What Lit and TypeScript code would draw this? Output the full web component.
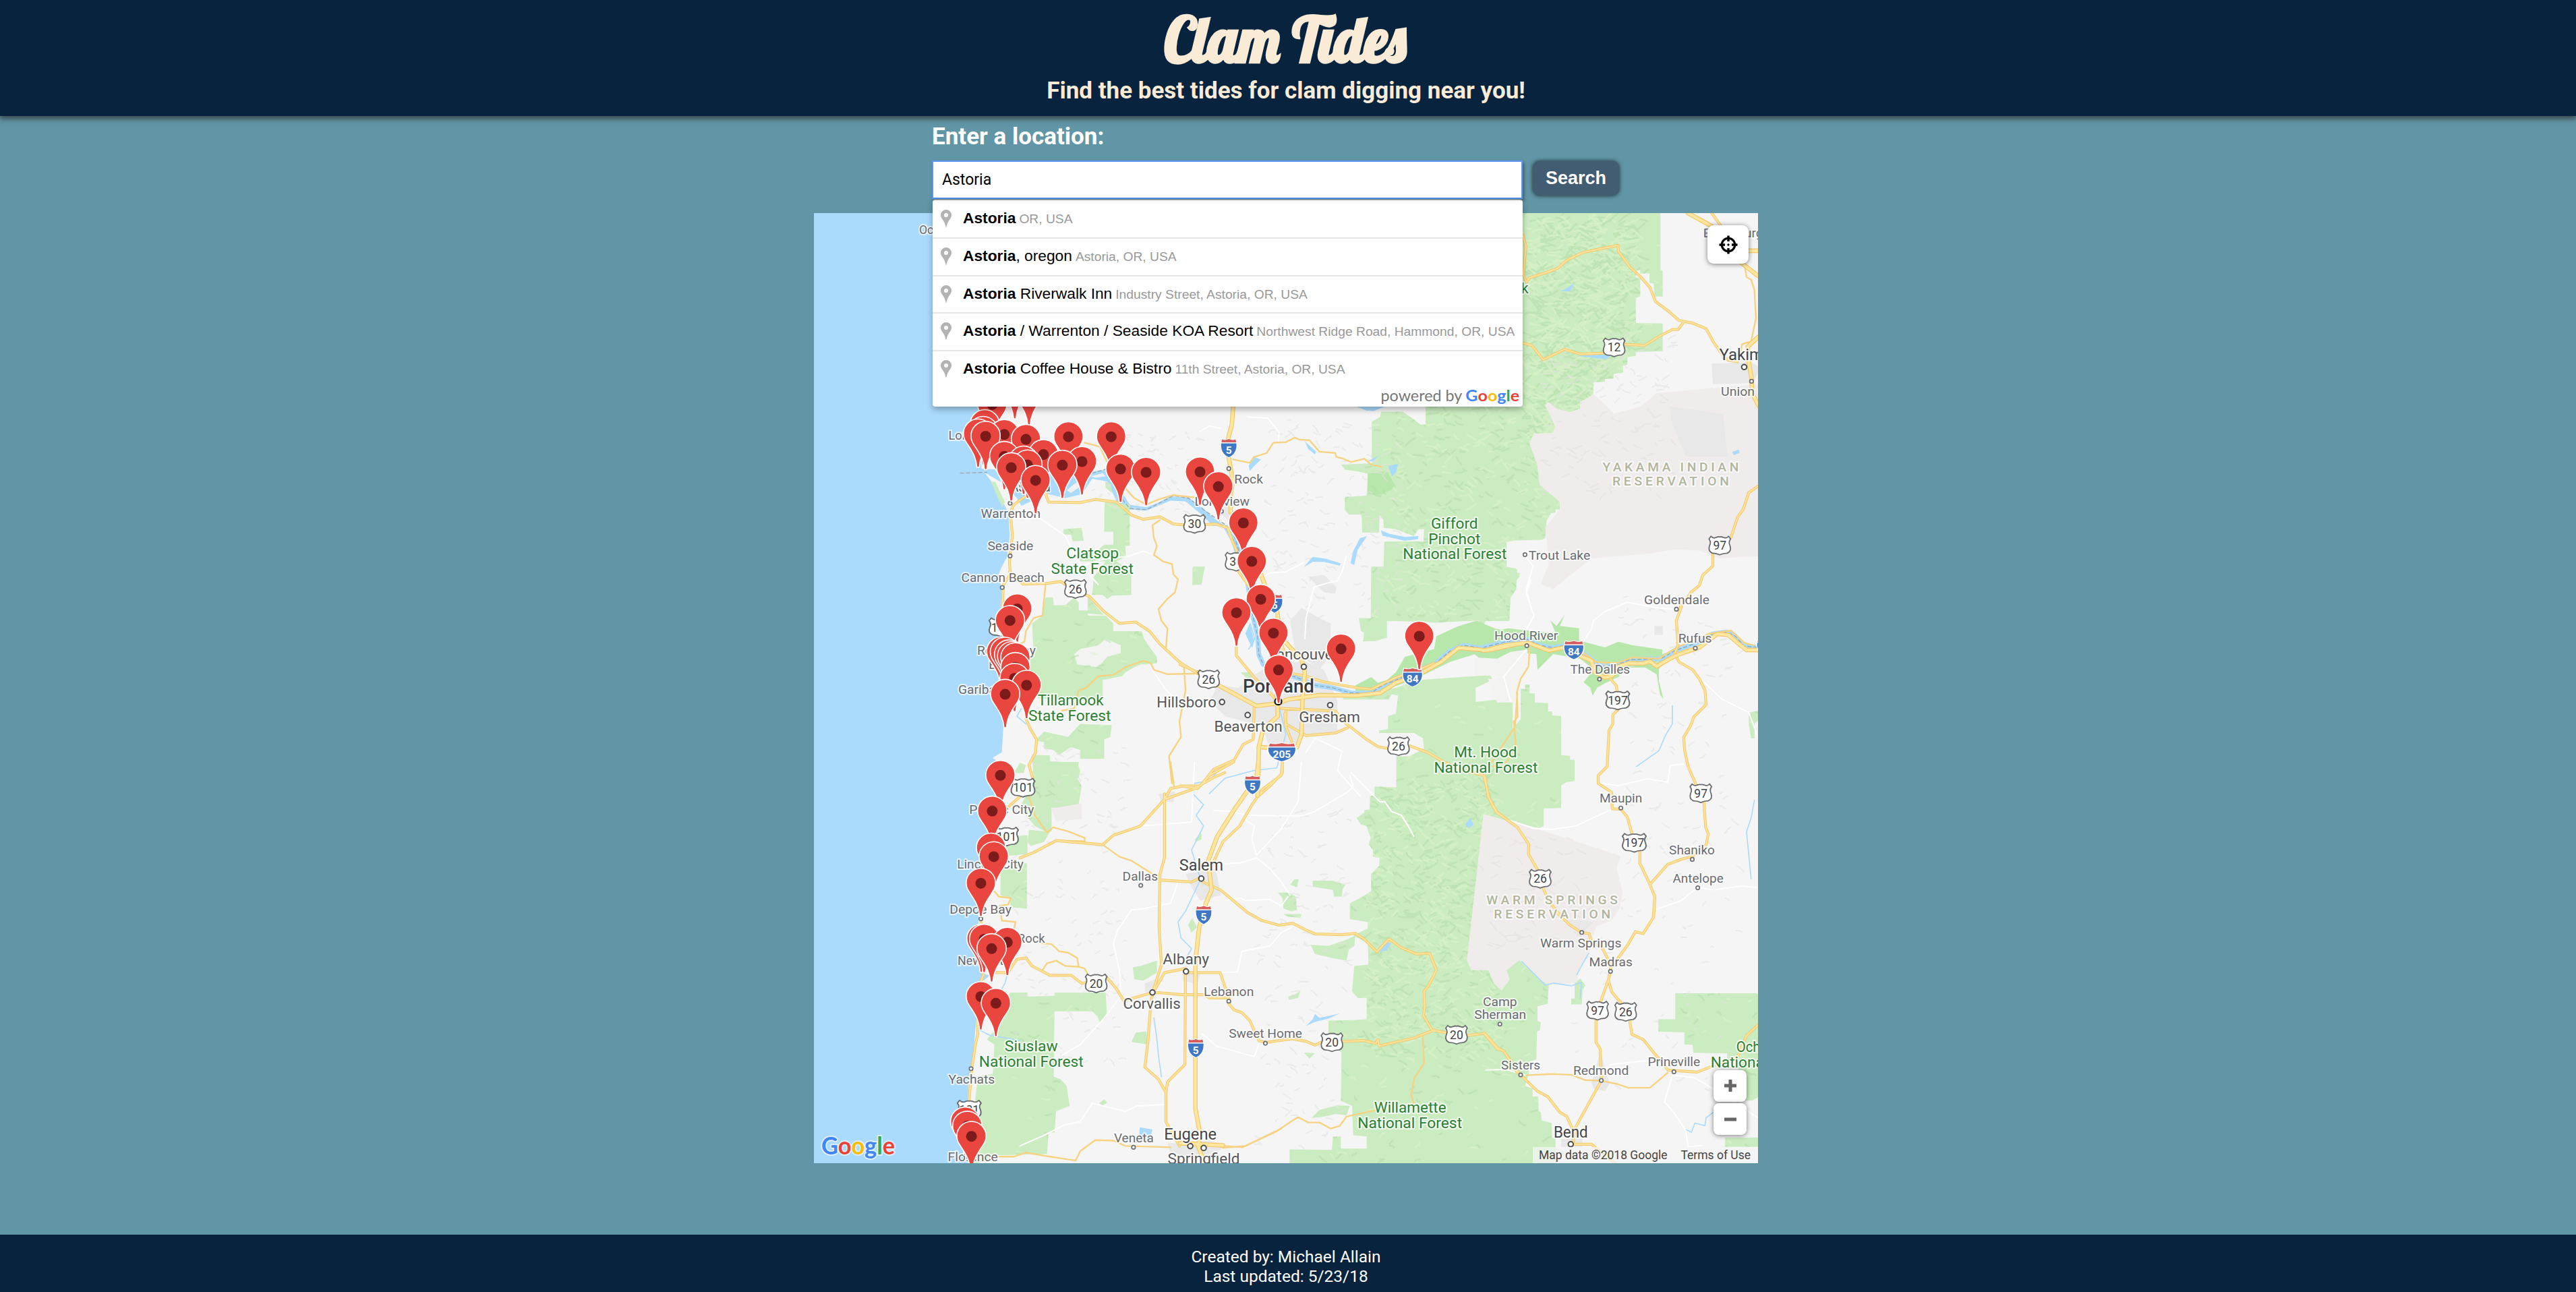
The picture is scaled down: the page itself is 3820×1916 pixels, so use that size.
import { LitElement, html, svg, css } from "lit";
import { customElement, state } from "lit/decorators.js";

/* ---------- map geometry ---------- */

// Each sheet has its own drawing grid, placed on the map by origin and scale.
type Sheet = { x: number; y: number; sx: number; sy: number };
const SHEETS: Record<string, Sheet> = {
  whole: { x: 1200, y: 300, sx: 0.90561, sy: 0.91837 },
  coastN: { x: 1200, y: 580, sx: 0.44643, sy: 0.38265 },
  coastS: { x: 1200, y: 1130, sx: 0.44643, sy: 0.39541 },
  valleyN: { x: 1750, y: 580, sx: 0.33333, sy: 0.38265 },
  valleyS: { x: 1750, y: 1130, sx: 0.33333, sy: 0.39541 },
  eastN: { x: 2200, y: 300, sx: 0.33333, sy: 0.38265 },
  eastM: { x: 2200, y: 860, sx: 0.33333, sy: 0.33333 },
  eastS: { x: 2200, y: 1300, sx: 0.33333, sy: 0.39286 },
};

const place = (s: string, x: number, y: number): [number, number] => {
  const t = SHEETS[s];
  return [+(t.x + x * t.sx).toFixed(1), +(t.y + y * t.sy).toFixed(1)];
};

const trace = (s: string, pts: string, close = false) => {
  const list = pts
    .trim()
    .split(/\s+/)
    .map((p) => {
      const [x, y] = p.split(",").map(Number);
      return place(s, x, y);
    });
  if (close) {
    // One winding direction for all areas, so that overlapping ones merge.
    let area = 0;
    list.forEach(([x, y], i) => {
      const [nx, ny] = list[(i + 1) % list.length];
      area += x * ny - nx * y;
    });
    if (area < 0) list.reverse();
  }
  return "M" + list.map((p) => p.join(" ")).join("L") + (close ? "Z" : "");
};

const shapes = (rows: [string, string][]) => rows.map(([s, p]) => trace(s, p, true)).join("");
const lines = (rows: [string, string][]) => rows.map(([s, p]) => trace(s, p)).join("");

const OCEAN = shapes([
  ["coastN", "-10,-700 560,-700 560,0 572,150 572,300 605,350 640,425 662,470 666,560 658,640 640,680 625,720 640,760 636,850 622,890 640,960 655,1000 650,1080 640,1120 655,1190 645,1300 640,1400 610,1420 620,1440 -10,1440"],
  ["coastS", "-10,-10 618,-10 625,130 600,200 592,330 568,400 570,480 562,560 562,600 565,680 572,800 562,860 552,1000 545,1100 530,1200 526,1290 532,1510 -10,1510"],
  ["coastN", "560,300 640,305 700,330 760,320 830,305 900,335 950,310 985,305 1010,340 1040,395 1065,440 1120,450 1160,432 1200,408 1260,413 1300,445 1350,498 1385,525 1340,522 1300,475 1250,427 1200,425 1120,463 1060,458 1022,430 990,350 940,340 905,400 850,415 790,398 740,425 705,445 690,415 640,355"],
]);

const SHOALS = shapes([
  ["coastN", "855,385 880,360 925,330 900,370 870,395"],
  ["coastN", "935,330 975,318 985,330 950,336"],
]);

const FOREST = shapes([
  ["valleyN", "1500,40 1092,50 1092,130 1070,130 1040,110 990,80 895,80 890,100 853,118 853,280 715,285 735,305 780,310 835,320 830,405 733,410 733,460 750,478 808,478 810,548 885,548 887,480 905,500 905,530 960,535 1040,562 1060,535 1085,535 1083,583 908,583 905,680 850,680 848,890 1060,893 1140,898 1225,893 1465,885 1470,800 1495,770 1500,690 1452,680 1450,585 1500,578"],
  ["valleyN", "795,880 920,878 920,955 870,968 815,970 818,935 805,930"],
  ["eastN", "-20,42 787,42 787,262 797,265 797,365 760,365 757,315 738,312 738,275 697,277 697,263 677,265 677,290 697,295 697,365 677,370 677,468 797,470 797,577 677,580 677,595 640,600 640,630 620,632 620,660 580,665 577,683 540,685 540,695 490,697 488,745 430,775 430,800 380,815 325,800 285,775 275,790 300,830 318,870 310,893 255,897 225,895 205,935 240,1020 250,1095 340,1160 340,1190 320,1190 320,1203 300,1205 280,1235 275,1300 260,1308 103,1312 103,1415 143,1418 145,1435 162,1437 160,1450 143,1470 143,1490 120,1520 115,1568 -20,1568"],
  ["eastM", "-20,0 145,0 140,25 117,50 115,183 12,183 -20,220"],
  ["valleyN", "725,1180 960,1150 1060,1120 1380,1100 1390,1120 1315,1150 1315,1205 1360,1200 1480,1190 1480,1568 865,1568 865,1535 962,1535 962,1415 1020,1415 1085,1385 1080,1345 1040,1325 885,1325 885,1315 925,1310 925,1260 960,1250 970,1180 940,1175 930,1195 725,1195"],
  ["eastM", "-40,545 110,545 110,660 130,660 165,620 165,485 185,485 185,465 205,465 205,505 228,505 228,545 287,548 287,585 305,585 305,603 345,605 345,780 385,782 385,800 405,800 405,895 368,900 345,915 345,1015 267,1017 267,1095 245,1105 130,1075 -40,1070"],
  ["valleyS", "962,0 962,105 905,105 903,92 865,92 865,125 845,128 843,178 820,180 820,190 785,210 805,235 830,240 848,285 840,310 858,330 858,355 888,360 885,390 850,420 850,485 800,510 755,530 755,590 835,600 835,625 770,650 835,680 838,760 775,765 765,860 790,885 830,885 830,965 775,968 660,970 660,1040 718,1090 715,1270 765,1290 770,1400 830,1405 830,1450 715,1450 715,1405 680,1405 675,1455 487,1453 487,1510 1510,1510 1510,0"],
  ["eastS", "-20,340 30,350 110,350 160,315 240,380 290,410 285,480 240,490 240,545 255,550 250,580 238,585 235,690 200,700 200,745 185,790 218,800 218,830 243,830 245,885 255,890 258,920 303,930 305,985 320,990 320,1090 -20,1090"],
  ["eastS", "853,440 1208,440 1230,445 1230,830 1195,845 1150,845 1130,690 1085,688 1083,667 933,665 930,635 893,633 893,588 778,585 778,538 853,538"],
  ["eastS", "1075,985 1230,985 1230,1020 1075,1020"],
  ["eastS", "390,460 405,460 405,400 430,385 453,410 440,430 437,482 390,482"],
  ["coastN", "983,350 1003,360 1005,395 985,375"],
  ["coastN", "980,485 982,430 1065,440 1065,600 1050,600 1052,640 1020,660 1070,695 1070,790 1005,793 990,806 975,790 940,790 945,720 985,660 900,660 900,635 950,625 980,595 1010,595 1010,545 980,545"],
  ["coastN", "845,535 905,530 912,580 875,582 870,556 845,556"],
  ["coastN", "1275,680 1312,680 1303,745 1272,752"],
  ["coastN", "925,795 950,830 978,868 925,862"],
  ["coastN", "785,800 810,800 812,830 850,830 880,800 895,820 895,850 925,850 925,870 985,870 1010,900 1010,930 1105,930 1112,960 1135,1000 1155,1030 1155,1055 1100,1060 1080,1070 1050,1090 1040,1105 975,1120 975,1190 930,1200 760,1190 735,1150 735,1040 745,1000 740,900 775,870"],
  ["coastN", "900,1290 1005,1295 1000,1340 980,1350 980,1425 900,1425 900,1390 870,1380 830,1410 810,1390 780,1385 780,1360 750,1355 780,1320 860,1340"],
  ["coastN", "740,1410 800,1412 800,1435 890,1440 900,1470 895,1500 850,1520 820,1568 750,1568"],
  ["coastN", "680,1480 700,1440 720,1450 712,1480"],
  ["coastN", "604,350 618,352 650,430 642,450 625,410"],
  ["coastS", "750,0 895,0 890,60 905,90 893,170 805,172 805,260 790,265 750,240 720,200 700,170 740,80"],
  ["coastS", "730,255 800,262 780,300 735,315 725,300"],
  ["coastS", "640,280 725,275 725,345 660,352 645,320"],
  ["coastS", "636,390 660,400 700,380 723,380 723,550 670,545 665,510 635,500"],
  ["coastS", "668,865 725,865 725,880 815,877 815,865 985,865 988,930 985,960 965,978 958,955 940,935 815,935 812,1180 835,1190 855,1215 865,1290 820,1310 815,1390 795,1390 790,1470 620,1475 560,1505 540,1505 545,1330 560,1180 610,1170 615,1060 590,1040 620,1000 600,960"],
  ["coastS", "1075,770 1100,765 1155,745 1155,790 1110,820 1080,815"],
  ["coastS", "1070,1050 1085,1015 1120,1010 1125,1060"],
  ["coastS", "963,1280 980,1265 990,1278 975,1288"],
  ["valleyS", "590,445 680,445 735,460 722,480 720,505 685,505 680,480 590,468"],
  ["valleyS", "435,490 485,490 515,505 520,555 495,560 460,550 455,510"],
  ["valleyS", "580,685 660,690 745,665 780,650 775,690 750,705 740,745 690,738 600,720"],
  ["valleyS", "490,460 508,440 528,440 520,470"],
  ["valleyS", "460,570 540,570 535,585 480,580"],
  ["valleyS", "480,880 515,870 535,858 525,885 485,892"],
  ["valleyS", "585,1335 620,1305 700,1288 755,1290 740,1325 690,1320 640,1330"],
  ["valleyS", "35,610 55,585 75,620 50,640"],
  ["valleyS", "65,290 95,265 95,290 70,300"],
  ["valleyS", "550,1090 600,1092 575,1112"],
  ["valleyN", "55,685 110,680 95,750 55,752"],
  ["valleyN", "270,1090 320,1090 400,1180 390,1200 350,1160"],
  ["eastM", "1180,590 1230,580 1230,620 1205,640 1205,705 1190,705 1180,640"],
  ["eastN", "320,1430 360,1390 445,1385 430,1415 385,1425 365,1450 322,1455"],
]);

const GORGE = shapes([
  ["valleyN", "780,1140 850,1108 880,1130 920,1120 960,1090 1000,1030 1130,1000 1140,950 1240,910 1320,890 1400,920 1510,940 1510,1040 1400,1085 1310,1020 1200,1050 1060,1110 940,1150 850,1190 780,1180"],
  ["eastM", "-20,205 60,225 110,215 190,225 320,235 297,180 325,205 360,155 340,205 425,215 425,270 540,300 600,275 660,290 795,310 795,330 860,310 780,395 780,450 800,530 785,510 770,420 720,390 600,390 605,430 540,460 505,480 485,515 475,480 445,455 490,400 430,350 310,330 240,400 235,330 110,320 -20,330"],
  ["valleyN", "835,320 920,310 960,370 900,400 835,400"],
]);

const CLEARING = shapes([
  ["coastN", "880,1020 900,1000 960,985 985,960 1035,985 1035,1015 990,1030 960,1070 890,1060"],
  ["eastM", "-40,345 60,350 120,320 195,310 195,385 150,470 148,545 60,545 20,440 68,440 65,425 -40,425"],
]);

const RESERVATION = shapes([
  ["eastN", "225,895 255,897 310,893 318,870 300,830 275,790 290,775 325,800 390,815 430,800 430,775 490,745 560,800 580,820 700,790 770,740 950,725 1230,705 1230,1372 1150,1375 1050,1380 960,1350 850,1345 750,1360 480,1380 310,1498 255,1480 290,1400 275,1260 340,1190 340,1160 250,1095 240,1020 205,935"],
  ["whole", "1104,988 1196,1013 1303,1047 1329,1056 1322,1075 1332,1115 1327,1140 1314,1159 1288,1170 1277,1213 1262,1234 1257,1260 1211,1264 1193,1251 1163,1224 1142,1240 1147,1255 1134,1273 1121,1261 1112,1240 1084,1240 1077,1224"],
  ["coastS", "805,175 905,155 905,215 820,220"],
]);

const URBAN = shapes([
  ["valleyN", "130,1200 170,1140 260,1150 330,1100 420,1050 560,1050 640,1080 700,1200 700,1330 560,1330 500,1400 400,1400 370,1300 200,1260"],
  ["valleyN", "490,890 540,840 620,880 670,900 670,1020 620,1080 560,1040 510,1000"],
  ["valleyN", "570,720 640,712 695,760 690,785 640,780"],
  ["coastS", "1250,420 1350,400 1368,500 1300,520 1270,470"],
  ["coastS", "1115,830 1160,810 1150,870 1115,862"],
  ["coastS", "1240,780 1300,790 1290,830 1240,822"],
  ["coastS", "1190,1430 1330,1420 1380,1440 1350,1470 1250,1490 1200,1470"],
  ["coastS", "1160,120 1215,110 1210,150 1170,150"],
  ["eastN", "1015,625 1190,620 1230,640 1200,700 1020,705"],
  ["eastN", "825,790 1065,820 1085,985 900,985 840,860"],
  ["eastS", "480,780 520,660 560,780 540,810 490,800"],
  ["eastS", "345,990 440,990 440,1020 345,1020"],
  ["eastS", "360,160 490,170 440,215"],
  ["eastM", "760,205 798,205 798,245 760,245"],
  ["valleyN", "180,380 240,420 225,510 150,450"],
]);

const LAKES = shapes([
  ["valleyN", "893,540 930,553 1000,565 1060,562 1058,574 1000,580 900,560"],
  ["valleyN", "832,562 800,570 770,620 758,668 775,674 790,615"],
  ["valleyN", "550,682 590,642 650,650 715,668 710,676 640,662 590,662"],
  ["valleyN", "925,290 970,282 960,315 943,330"],
  ["valleyN", "305,290 325,255 360,265 330,290 310,310"],
  ["valleyN", "290,940 310,900 330,970 320,995"],
  ["valleyN", "780,58 915,58 860,78 830,76"],
  ["valleyN", "555,195 605,235 600,245 570,225"],
  ["valleyN", "830,275 885,248 860,270"],
  ["valleyS", "560,990 590,965 600,945 620,960 710,943 660,962 600,975"],
  ["valleyS", "885,715 915,680 940,678 920,705"],
  ["valleyS", "1268,235 1290,210 1305,235 1285,248"],
  ["eastN", "343,345 375,330 405,312 385,345"],
  ["eastN", "415,595 530,590 570,590 545,608"],
  ["eastN", "1105,968 1135,958 1140,970 1115,980"],
  ["coastS", "1098,1370 1140,1378 1130,1425 1095,1415"],
  ["coastS", "560,790 600,800 580,820"],
]);

const STREAMS = lines([
  ["eastS", "170,320 240,380 275,410 310,402 390,412 435,400 430,460"],
  ["eastS", "415,370 440,330 468,290"],
  ["eastS", "900,955 925,965 940,930 985,940 990,910 1022,890"],
  ["coastS", "1360,30 1330,70 1280,80 1275,120 1310,160 1285,200 1310,240 1270,330 1300,440 1250,560 1225,600 1235,660 1270,700 1240,760"],
  ["valleyN", "440,1220 470,1330 430,1460 330,1470 200,1500 130,1560"],
  ["coastS", "1145,960 1155,1040 1160,1100 1170,1180"],
  ["coastN", "705,1230 690,1260 720,1290"],
  ["coastN", "1465,900 1480,960 1460,1000"],
  ["eastM", "840,560 840,640 810,690 780,760 680,830"],
  ["eastM", "1205,980 1190,1060 1170,1120 1190,1330"],
  ["coastS", "660,790 650,830 640,850"],
  ["coastS", "565,1005 600,1025 700,1045"],
]);

const COLUMBIA = lines([
  ["coastN", "1385,528 1410,580 1420,620"],
  ["valleyN", "240,560 262,620 300,740 320,860 345,950 350,1020 370,1060 440,1090 520,1110 600,1140 680,1150 760,1170 850,1170 900,1140 960,1120 1060,1080 1130,1060 1200,1008 1260,985 1350,998 1500,973"],
  ["eastM", "0,300 100,275 195,265 250,290 310,302 360,290 440,320 500,368 530,385 600,375 650,355 740,352 790,350 850,315 950,280 1020,240 1080,232 1120,250 1160,295 1225,300"],
]);

const TRACKS = lines([
  ["valleyN", "90,155 130,135 180,145"],
  ["valleyN", "300,100 390,105 440,160 437,200"],
  ["valleyN", "370,720 400,705 470,700 550,665"],
  ["valleyN", "740,640 720,700 700,735 650,745 595,760 560,880 555,960"],
  ["valleyN", "560,1400 600,1345 720,1395 700,1470 800,1568"],
  ["valleyS", "760,40 830,100 890,150 910,148 940,185 985,200 1015,240 1040,280"],
  ["valleyS", "200,382 270,378 340,360 400,400 450,450 490,500"],
  ["valleyS", "150,182 230,185 300,200 540,203 600,185 740,115 770,95 755,50"],
  ["valleyS", "200,520 270,510 290,520 400,515 450,540 480,505"],
  ["valleyS", "100,1020 160,1065 330,1105 350,1060"],
  ["valleyS", "80,790 255,788 275,710 400,690 450,640 495,620"],
  ["valleyS", "540,0 525,150 450,250 340,350 320,290 330,240 280,210"],
  ["eastN", "185,1370 220,1410 190,1500 210,1568"],
  ["eastM", "210,0 190,60 225,160 190,220"],
  ["eastM", "190,310 90,430 120,540"],
  ["eastM", "850,130 780,125 640,100 540,140 490,180 480,220 440,280"],
  ["eastM", "965,440 1060,530 1180,590 1221,700"],
  ["eastM", "890,820 830,825 820,900 730,885 600,915 520,905"],
  ["eastM", "120,1070 220,1105 300,1110 410,1095 570,1020"],
  ["eastS", "10,730 100,728 190,750"],
  ["eastS", "840,750 805,850 855,900 900,960 910,1020 970,1015"],
  ["eastS", "850,750 940,760 1020,800 1221,910"],
  ["eastS", "765,125 880,90 950,42 1030,50 1150,35 1221,42"],
  ["eastS", "560,710 660,700 730,695"],
  ["coastN", "750,480 800,520 850,560 900,670 960,750"],
  ["coastN", "900,680 980,650 1060,640 1110,620 1145,635"],
  ["coastN", "1140,1080 1180,1150 1220,1200"],
  ["coastS", "1225,450 1200,530 1110,550 1070,555 1025,630 1010,680 1030,780 1035,860"],
  ["coastS", "700,1440 780,1400 850,1360 900,1350 940,1280 1050,1310 1090,1290 1180,1285"],
  ["coastS", "1040,870 980,960 900,1060 840,1100"],
  ["coastS", "1100,240 1270,225 1280,0"],
]);

const MINOR = lines([
  ["coastN", "915,200 965,215 1000,300 1060,390 1080,415 1120,440 1160,420 1210,403 1300,415"],
  ["coastN", "1165,500 1140,520 1145,570 1155,600 1145,635 1175,660 1205,670 1210,710 1225,730 1215,780 1190,805 1160,845 1170,890 1190,920 1185,1000"],
  ["coastN", "840,1238 880,1230 895,1160 920,1150 960,1105 1010,1100 1050,1070 1110,1045 1135,1055 1145,1080 1190,1097 1280,1095"],
  ["coastN", "785,750 775,870 745,880 720,930 715,970 690,990"],
  ["coastN", "1245,1070 1250,1160 1230,1280 1235,1340 1195,1415 1205,1520"],
  ["valleyN", "235,265 310,278 330,255 385,240 415,200 470,198 510,180 530,188 575,190 620,235 690,240 695,255 720,260 760,275 820,262 850,285 895,293"],
  ["valleyN", "1500,1170 1490,1300 1400,1420 1360,1470"],
  ["valleyS", "190,1447 290,1440 430,1385 500,1345 525,1332 570,1352 620,1352 670,1375 710,1365 740,1330 860,1308 1040,1285 1028,1245 1042,1185 1085,1130 1080,1030"],
  ["coastS", "730,130 750,200 790,265 810,245 860,260 915,285 915,297 820,295"],
  ["coastS", "975,310 1030,355 1070,370 1140,420"],
  ["coastS", "1200,0 1212,90"],
  ["coastS", "775,780 790,755 820,745 850,765 895,768 890,735 860,715 830,710 805,683 770,680"],
  ["coastS", "895,768 915,775 930,805"],
  ["coastS", "615,485 630,505 670,510 660,535 632,540 640,595 685,600 680,630"],
  ["coastS", "630,1480 680,1480 720,1465 800,1480 885,1495 900,1460 950,1418 1010,1420 1050,1440 1200,1445"],
  ["coastS", "1320,1435 1440,1445 1568,1375"],
  ["eastN", "1160,240 1170,290 1190,300 1205,340 1212,450 1190,540"],
  ["eastN", "1140,600 1150,550 1221,530"],
  ["eastM", "440,320 500,365 590,370 660,345 780,350 860,300 1000,240 1100,225 1160,280 1200,290"],
  ["eastM", "205,300 200,385 165,440 148,500 152,610 135,630 145,760 100,810 40,830"],
  ["eastM", "540,370 555,430"],
  ["eastS", "190,750 300,745 390,748 450,768 520,770 590,782 645,797 740,797 820,740"],
]);

const ROADS = lines([
  ["coastN", "715,410 680,440 668,470 675,560 665,660 668,710 645,750 642,830 640,950"],
  ["coastN", "720,1270 735,1310 755,1350 752,1400 730,1450 742,1500"],
  ["coastN", "780,380 795,430 900,432 950,420 1020,430 1070,480 1110,497 1165,487 1210,515 1260,520 1350,515 1390,530 1405,580 1420,620"],
  ["coastN", "665,700 710,748 790,745 835,738 880,770 930,795 980,855 1030,900 1085,895 1130,930 1165,980 1230,1050 1290,1095"],
  ["valleyN", "0,1060 80,1090"],
  ["valleyN", "260,700 310,760"],
  ["valleyN", "250,990 250,1025 330,1110 400,1170 435,1205"],
  ["valleyN", "450,1230 590,1235 690,1240 740,1290 830,1350 880,1378 925,1385"],
  ["valleyN", "1020,1375 1100,1400 1180,1440 1260,1470 1355,1490 1370,1568"],
  ["valleyN", "330,1220 325,1350 280,1370 240,1430 150,1465 90,1530 0,1530"],
  ["valleyN", "470,1240 470,1290 560,1335 690,1325 745,1305"],
  ["valleyN", "465,1250 470,1300 500,1365"],
  ["valleyN", "455,1430 455,1480 400,1530 350,1568"],
  ["valleyN", "500,1095 560,1105 630,1125 720,1140 790,1150 850,1155 960,1110 1060,1080 1130,1055"],
  ["valleyN", "435,1210 430,1150 400,1010"],
  ["valleyS", "455,0 450,50 370,100 320,160 265,240 190,300 140,390"],
  ["valleyS", "100,450 180,480 300,565 365,595 440,612 500,605 560,630 600,645 720,648 780,643 820,665 875,712 905,685 930,663 980,695 1050,720 1110,718 1140,780 1105,840 1085,860 1088,920 1082,950 1120,1005 1180,1015"],
  ["valleyS", "215,905 240,930 275,940 310,970 350,1045 380,1052 500,1038 560,1048 600,1062 630,1050"],
  ["valleyS", "725,1048 820,1045 870,1055 880,1042 885,1065 960,1050 1040,1035 1130,1005"],
  ["valleyS", "1280,1025 1355,1018 1410,1070 1440,1085 1500,1165"],
  ["valleyS", "1355,50 1370,130 1405,185 1500,245"],
  ["coastS", "700,130 660,170 630,230"],
  ["coastS", "820,295 745,340 700,360"],
  ["coastS", "820,295 975,310 1010,275 1100,240 1180,140 1200,100 1240,90 1290,100 1330,50 1410,0"],
  ["coastS", "1180,140 1280,100 1340,60 1380,40"],
  ["coastS", "1180,120 1180,360 1165,420 1162,620 1170,760 1145,850 1135,900 1125,1050 1115,1145 1160,1190 1185,1240 1185,1350 1230,1440"],
  ["coastS", "1250,790 1248,1135 1190,1200 1185,1240"],
  ["coastS", "1165,443 1270,450 1300,435"],
  ["coastS", "620,790 660,790 690,740 720,735 740,765 800,800 870,800 905,830 930,825"],
  ["coastS", "990,810 1020,850 1045,895 1130,868 1160,865 1240,873 1310,873 1330,885 1390,885"],
  ["coastS", "1150,850 1180,790 1250,775 1260,790 1365,790 1395,890"],
  ["coastS", "570,600 578,800 555,870 560,1020 552,1060 540,1150 530,1280"],
  ["eastN", "174,125 188,170 183,220 178,280 190,310 205,292 270,275 330,255 370,225 440,195 520,180 598,167 600,190 650,250 700,290 740,330 765,385 820,420 870,458 930,468 990,490 1025,545 1070,600 1090,612 1130,618"],
  ["eastN", "174,545 215,555 265,610 360,570 430,588 530,585"],
  ["eastN", "628,550 715,555 780,520 840,493 865,493 890,465"],
  ["eastN", "1015,42 1055,90"],
  ["eastN", "1221,1100 1180,1125 1155,1190 1130,1220 1100,1300"],
  ["eastN", "1020,1365 1020,1410 975,1445 960,1485 925,1510 875,1568"],
  ["eastM", "880,90 880,120 858,180 865,290 850,330 870,365 930,400 960,440 985,490 990,555 935,610 920,650 890,700 895,760 910,830 945,910"],
  ["eastM", "980,990 988,1100 1000,1130 990,1180 930,1230 880,1243 820,1265 740,1355"],
  ["eastM", "560,435 590,470 595,495"],
  ["eastM", "600,575 575,600 575,640 558,670 550,830 510,870 510,905 570,945 572,1018 610,1020 640,1055 660,1130"],
  ["eastM", "695,1210 695,1260 740,1355 762,1410 757,1500"],
  ["eastM", "0,870 25,970 60,1035 150,1100 200,1175 200,1220 240,1290"],
  ["eastM", "265,1370 290,1430 340,1490"],
  ["eastS", "320,130 380,180 435,211 470,215 480,250 525,265 565,330 565,358 555,390 520,475"],
  ["eastS", "555,390 570,435 610,475"],
  ["eastS", "500,540 500,625 518,650 525,768 410,945 395,1010"],
  ["eastS", "650,545 660,595 710,615 820,730 950,738 1020,715 1130,680 1170,600 1221,560"],
  ["eastS", "762,70 755,155 710,215 675,208 640,260 570,340"],
  ["eastS", "0,590 60,650 90,658 160,745 240,810 285,830 340,890 370,905 400,960 400,1010 480,1010 585,1082"],
]);

const FREEWAYS = lines([
  ["valleyN", "238,40 230,130 215,180 215,250 235,350 225,400 225,470"],
  ["valleyN", "360,710 380,760 430,840 450,980 470,1060 430,1150 435,1260 370,1310 350,1380 348,1480 345,1568"],
  ["valleyS", "348,0 340,60 240,180 165,280 125,370 140,480 115,530 85,620 68,750 68,1300 90,1400 80,1440 110,1510"],
  ["valleyN", "470,975 540,1040 555,1090 545,1180 540,1330 520,1380 430,1385 365,1380"],
  ["valleyN", "80,1090 170,1140 340,1220 440,1210 480,1195 620,1178 780,1180 890,1170 960,1130 1060,1100 1160,1050 1240,995 1370,1005 1500,980"],
  ["valleyS", "0,1430 190,1438"],
  ["eastN", "910,42 1000,85 1060,120 1140,230 1221,285"],
  ["eastN", "1180,188 1225,188"],
  ["eastN", "1225,520 1175,560 1180,620 1192,680 1195,740 1225,790"],
  ["eastM", "0,315 100,290 200,280 290,315 360,300 435,340 480,360 495,410 540,435 575,425 600,385 650,370 710,372 740,362 770,385 820,355 870,330 960,300 1040,240 1090,245 1130,280 1170,312 1225,312"],
]);

/* ---------- relief ---------- */

const rng = (seed: number) => () => ((seed = (seed * 1664525 + 1013904223) % 4294967296) / 4294967296);

// Short curved ridges, scattered over a box with a shared lean.
const ridges = (seed: number, n: number, x: number, y: number, w: number, h: number, len: number) => {
  const r = rng(seed);
  let d = "";
  for (let i = 0; i < n; i++) {
    const a = -0.9 + r() * 1.9;
    const l = len * (0.4 + r());
    const px = x + r() * w;
    const py = y + r() * h;
    const dx = Math.cos(a) * l;
    const dy = Math.sin(a) * l;
    d += `M${px.toFixed(0)} ${py.toFixed(0)}q${(dx / 2 + r() * 6 - 3).toFixed(1)} ${(dy / 2 + r() * 6 - 3).toFixed(1)} ${dx.toFixed(1)} ${dy.toFixed(1)}`;
  }
  return d;
};

const FOREST_DARK =
  ridges(7, 1100, 1500, 316, 1107, 1409, 10) + ridges(19, 420, 2255, 320, 170, 330, 17) + ridges(79, 420, 2020, 1150, 200, 420, 12) + ridges(83, 160, 2060, 600, 240, 320, 12);
const FOREST_LIGHT =
  ridges(23, 900, 1500, 316, 1107, 1409, 9) + ridges(31, 380, 2255, 320, 170, 330, 16) + ridges(89, 380, 2020, 1150, 200, 420, 11) + ridges(97, 160, 2060, 600, 240, 320, 12);
const PLAIN_DARK =
  ridges(41, 150, 1870, 620, 200, 300, 9) +
  ridges(43, 130, 1500, 1100, 170, 480, 8) +
  ridges(47, 120, 1860, 1200, 140, 500, 10) +
  ridges(53, 130, 2280, 500, 200, 240, 11) +
  ridges(59, 90, 2400, 880, 180, 430, 10) +
  ridges(61, 70, 2190, 1240, 160, 170, 13) +
  ridges(67, 60, 2330, 1330, 250, 300, 8) +
  ridges(71, 60, 1620, 640, 160, 120, 7);

/* ---------- map annotations (sheet "whole") ---------- */

type Label = [text: string, left: number, right: number, baseline: number, kind: string];
const LABELS: Label[] = [
  ["Ocean Shores", 180, 300, 51, "town"],
  ["Ellensburg", 1464, 1562, 57, "town"],
  ["Yakima", 1490, 1577, 255, "city"],
  ["Union Gap", 1493, 1592, 313, "town"],
  ["Long Beach", 228, 334, 383, "town"],
  ["Astoria", 329, 395, 467, "mid"],
  ["Rock", 696, 743, 454, "town"],
  ["Longview", 631, 721, 490, "town"],
  ["Warrenton", 281, 379, 509, "town"],
  ["Seaside", 292, 367, 562, "town"],
  ["Cannon Beach", 249, 385, 613, "town"],
  ["Rockaway", 275, 371, 731, "town"],
  ["Beach", 294, 350, 753, "town"],
  ["Garibaldi", 244, 328, 794, "town"],
  ["Pacific City", 262, 368, 988, "town"],
  ["Lincoln City", 242, 351, 1076, "town"],
  ["Depoe Bay", 230, 331, 1149, "town"],
  ["Rock", 341, 386, 1195, "town"],
  ["Newport", 243, 318, 1232, "town"],
  ["Yachats", 228, 304, 1423, "town"],
  ["Florence", 227, 309, 1548, "town"],
  ["Veneta", 499, 564, 1518, "town"],
  ["Eugene", 581, 667, 1513, "city"],
  ["Springfield", 587, 705, 1553, "mid"],
  ["Dallas", 513, 571, 1095, "town"],
  ["Salem", 606, 678, 1079, "city"],
  ["Albany", 579, 655, 1230, "mid"],
  ["Corvallis", 514, 608, 1302, "mid"],
  ["Lebanon", 646, 728, 1282, "town"],
  ["Sweet Home", 687, 807, 1349, "town"],
  ["Vancouver", 750, 866, 738, "mid"],
  ["Portland", 710, 827, 792, "metro"],
  ["Hillsboro", 569, 667, 815, "mid"],
  ["Beaverton", 663, 775, 855, "mid"],
  ["Gresham", 802, 902, 839, "mid"],
  ["Hood River", 1122, 1226, 707, "town"],
  ["The Dalles", 1246, 1344, 761, "town"],
  ["Goldendale", 1367, 1474, 649, "town"],
  ["Rufus", 1423, 1478, 711, "town"],
  ["Trout Lake", 1178, 1279, 577, "town"],
  ["Maupin", 1294, 1364, 969, "town"],
  ["Shaniko", 1408, 1483, 1053, "town"],
  ["Antelope", 1414, 1497, 1099, "town"],
  ["Warm Springs", 1197, 1330, 1203, "town"],
  ["Madras", 1277, 1348, 1234, "town"],
  ["Camp", 1103, 1159, 1298, "town"],
  ["Sherman", 1089, 1174, 1319, "town"],
  ["Sisters", 1133, 1197, 1400, "town"],
  ["Redmond", 1251, 1342, 1409, "town"],
  ["Prineville", 1373, 1459, 1395, "town"],
  ["Bend", 1219, 1275, 1510, "city"],
  ["Park", 1130, 1178, 147, "park"],
  ["Clatsop", 421, 507, 575, "park"],
  ["State Forest", 396, 531, 600, "park"],
  ["Tillamook", 374, 482, 812, "park"],
  ["State Forest", 359, 494, 837, "park"],
  ["Gifford", 1018, 1095, 527, "park"],
  ["Pinchot", 1014, 1099, 552, "park"],
  ["National Forest", 972, 1142, 576, "park"],
  ["Mt. Hood", 1056, 1159, 896, "park"],
  ["National Forest", 1023, 1193, 921, "park"],
  ["Siuslaw", 320, 407, 1371, "park"],
  ["National Forest", 278, 449, 1396, "park"],
  ["Willamette", 925, 1043, 1470, "park"],
  ["National Forest", 898, 1069, 1495, "park"],
  ["Ochoco", 1518, 1595, 1372, "park"],
  ["National Forest", 1476, 1646, 1397, "park"],
  ["YAKAMA INDIAN", 1299, 1522, 434, "reserve"],
  ["RESERVATION", 1315, 1506, 457, "reserve"],
  ["WARM SPRINGS", 1109, 1324, 1134, "reserve"],
  ["RESERVATION", 1121, 1312, 1156, "reserve"],
];

const DOTS: [number, number][] = [
  [687, 430], [675, 499], [329, 486], [329, 571], [316, 622], [281, 1157], [265, 1399], [531, 1526],
  [543, 1103], [687, 1290], [747, 1358], [1175, 716], [1294, 770], [1420, 657], [1451, 720], [1172, 569],
  [1329, 978], [1446, 1061], [1455, 1107], [1265, 1179], [1312, 1242], [1131, 1327], [1165, 1409],
  [1297, 1418], [1416, 1404], [1543, 289],
];
const CITY_DOTS: [number, number][] = [
  [624, 1524], [646, 1527], [642, 1092], [617, 1242], [562, 1276], [676, 807], [718, 828], [853, 812],
  [810, 750], [1247, 1521], [1531, 266],
];

const US_ROUTES: [string, number, number][] = [
  ["12", 1318, 234], ["97", 1491, 554], ["30", 631, 519], ["30", 699, 580], ["26", 436, 624], ["26", 654, 770],
  ["26", 965, 878], ["101", 350, 945], ["101", 323, 1024], ["101", 314, 686], ["101", 262, 1465], ["20", 470, 1261],
  ["20", 856, 1356], ["20", 1060, 1344], ["26", 1197, 1092], ["197", 1324, 804], ["197", 1351, 1034],
  ["97", 1460, 954], ["97", 1291, 1305], ["26", 1337, 1307],
];
const INTERSTATES: [string, number, number][] = [
  ["5", 687, 397], ["5", 762, 648], ["5", 726, 941], ["5", 646, 1151], ["5", 633, 1366],
  ["205", 774, 888], ["84", 988, 767], ["84", 1252, 723], ["84", 1568, 719],
];

const PINS: [string, number, number][] = [
  ["coastN", 730, 2], ["coastN", 683, -22], ["coastN", 608, 52], ["coastN", 583, 130], ["coastN", 578, 156],
  ["coastN", 561, 166], ["coastN", 648, 168], ["coastN", 586, 175], ["coastN", 861, 177], ["coastN", 1003, 177],
  ["coastN", 720, 187], ["coastN", 778, 246], ["coastN", 648, 253], ["coastN", 712, 271], ["coastN", 906, 273],
  ["coastN", 725, 286], ["coastN", 841, 287], ["coastN", 671, 297], ["coastN", 1034, 302], ["coastN", 1298, 313],
  ["coastN", 1119, 315], ["coastN", 752, 346], ["coastN", 1359, 370], ["coastN", 1442, 511], ["coastN", 1470, 660],
  ["coastN", 1500, 807], ["coastN", 691, 844], ["coastN", 1419, 859], ["coastN", 667, 889], ["coastN", 1542, 938],
  ["valleyN", 1064, 950], ["valleyN", 716, 999], ["coastN", 638, 1010], ["coastN", 650, 1012],
  ["coastN", 664, 1022], ["coastN", 674, 1028], ["coastN", 685, 1033], ["coastN", 685, 1071], ["coastN", 1559, 1081],
  ["coastN", 682, 1113], ["coastN", 722, 1140], ["coastN", 651, 1175], ["coastN", 635, 1489], ["coastS", 608, 184],
  ["coastS", 604, 323], ["coastS", 613, 355], ["coastS", 570, 455], ["coastS", 572, 664], ["coastS", 581, 665],
  ["coastS", 658, 676], ["coastS", 606, 700], ["coastS", 570, 880], ["coastS", 620, 905], ["coastS", 518, 1350],
  ["coastS", 525, 1366], ["coastS", 539, 1404],
];

const GOOGLE: [string, string][] = [
  ["G", "#4285f4"], ["o", "#ea4335"], ["o", "#fbbc05"], ["g", "#4285f4"], ["l", "#34a853"], ["e", "#ea4335"],
];

const labelTpl = ([text, l, r, b, kind]: Label) => {
  const [x, y] = place("whole", l, b);
  const w = (r - l) * SHEETS.whole.sx;
  return svg`<text class="label ${kind}" x=${x} y=${y} textLength=${w.toFixed(1)}
    lengthAdjust=${kind === "reserve" ? "spacing" : "spacingAndGlyphs"}>${text}</text>`;
};

const usShield = ([n, zx, zy]: [string, number, number]) => {
  const [x, y] = place("whole", zx, zy);
  const k = n.length > 2 ? 1.1 : 1;
  return svg`<g transform="translate(${x} ${y})">
    <path class="us" transform="scale(${k} 1)" d="M-13-13.5Q-9-9.5-5-12Q-2-13.3 0-12.5Q2-13.3 5-12Q9-9.5 13-13.5L16-9.5Q12.500-5 15 0Q18 8.500 11 11.500Q5 11.500 0 14Q-5 11.500-11 11.500Q-18 8.500-15 0Q-12.500-5-16-9.500Z"></path>
    <text class="route" y="6.500">${n}</text></g>`;
};

const interstate = ([n, zx, zy]: [string, number, number]) => {
  const [x, y] = place("whole", zx, zy);
  const k = n.length === 1 ? 1 : n.length === 2 ? 1.24 : 1.76;
  return svg`<g transform="translate(${x} ${y})">
    <g transform="scale(${k} 1)">
      <path class="ihalo" d="M-10-13Q-5-11 0-13.500Q5-11 10-13L11.500-6Q12.500 8 0 13.500Q-12.500 8-11.500-6Z"></path>
      <path fill="#d65d5d" d="M-10-13Q-5-11 0-13.500Q5-11 10-13L11-8.500H-11Z"></path>
      <path fill="#3f77c4" d="M-11.300-7H11.300Q12.500 8 0 13.500Q-12.500 8-11.300-7Z"></path>
    </g>
    <text class="iroute" y="8">${n}</text></g>`;
};

const pinTpl = ([s, px, py]: [string, number, number]) => {
  const [x, y] = place(s, px, py);
  return svg`<g transform="translate(${x} ${y})">
    <path class="pin" d="M-1.800 49.500C-2.500 37-7 28.500-13.500 18.500C-18.500 11-21.700 7-21.700-.500A21.700 21.700 0 0 1 21.700-.500C21.700 7 18.500 11 13.500 18.500C7 28.500 2.500 37 1.800 49.500Z"></path>
    <circle r="8" fill="#7d1a1a"></circle></g>`;
};

@customElement("tide-map")
export class TideMap extends LitElement {
  static styles = css`
    :host { display: block; position: relative; width: 1400px; height: 1409px; overflow: hidden; background: #f5f5f5; }
    .canvas { display: block; width: 1400px; height: 1409px; }
    .label { font-family: Roboto, sans-serif; paint-order: stroke; stroke: rgba(255, 255, 255, 0.75); stroke-width: 4px; stroke-linejoin: round; }
    .town { font-size: 19.25px; fill: #6a6c72; }
    .mid { font-size: 21.5px; fill: #55575b; }
    .city { font-size: 23px; fill: #434548; }
    .metro { font-size: 27px; font-weight: 500; fill: #3a3c3f; }
    .park { font-size: 21.5px; fill: #2b8034; }
    .reserve { font-size: 19.25px; font-weight: 500; fill: #b2b59d; }
    .us { fill: #fff; stroke: #6a6c6f; stroke-width: 1.8px; stroke-linejoin: round; }
    .ihalo { fill: #fff; stroke: #fff; stroke-width: 2px; }
    .route, .iroute { font-family: Roboto, sans-serif; font-size: 17.500px; text-anchor: middle; fill: #3f4144; }
    .iroute { font-weight: 700; font-size: 15.5px; fill: #fff; }
    .pin { fill: #ea4640; stroke: #fff; stroke-width: 1.6px; stroke-linejoin: round; }
    .stroke { fill: none; stroke-linejoin: round; stroke-linecap: round; }
    .dot { fill: #fff; stroke: #6b6e73; stroke-width: 1.7px; }
    .dot.big { stroke: #4a4c4f; stroke-width: 2px; }
    .logo { font-family: "Product Sans", Lato, sans-serif; font-size: 36px; font-weight: 700; paint-order: stroke; stroke: rgba(255, 255, 255, 0.6); stroke-width: 4px; stroke-linejoin: round; }
    button { display: grid; place-items: center; border: 0; padding: 0; background: #fff; box-shadow: 0 1px 7px rgba(0, 0, 0, 0.5); }
    .locate { position: absolute; top: 18px; right: 14px; width: 61px; height: 57px; border-radius: 9px; }
    .zoom { position: absolute; right: 17px; bottom: 42px; display: grid; gap: 2.500px; }
    .zoom button { width: 49px; height: 47px; border-radius: 8px; }
    .credits { position: absolute; right: 0; bottom: 0; box-sizing: border-box; width: 334px; height: 24px; padding: 0 11px 0 9px; display: flex; justify-content: space-between; font: 17.5px/24px Roboto, sans-serif; color: #444; background: rgba(245, 245, 245, 0.72); white-space: nowrap; }
  `;

  render() {
    const [mx, my] = place("whole", 768, 806);
    return html`
      <svg class="canvas" viewBox="1207 316 1400 1409">
        <defs>
          <clipPath id="woods"><path d=${FOREST}></path></clipPath>
        </defs>
        <path d=${OCEAN} fill="#aadafc"></path>
        <path d=${SHOALS} fill="#f1f3f2"></path>
        <path d=${FOREST} fill="#cbecc1"></path>
        <path d=${GORGE} fill="#b7e7aa"></path>
        <path d=${CLEARING} fill="#f3f4f2"></path>
        <g clip-path="url(#woods)" class="stroke">
          <path d=${FOREST_DARK} stroke="#b4dba8" stroke-width="2.600" opacity=".5"></path>
          <path d=${FOREST_LIGHT} stroke="#def3c9" stroke-width="2.800" opacity=".6"></path>
        </g>
        <path d=${RESERVATION} fill="#f0eceb"></path>
        <path d=${URBAN} fill="#e8e8e8"></path>
        <g class="stroke">
          <path d=${PLAIN_DARK} stroke="#e2e2e0" stroke-width="2" opacity=".6"></path>
          <path d=${STREAMS} stroke="#aadafc" stroke-width="1.600"></path>
          <path d=${COLUMBIA} stroke="#aadafc" stroke-width="7"></path>
          <path d=${COLUMBIA} stroke="#8fa3b0" stroke-width="1.200" stroke-dasharray="5 4"></path>
          <path d=${lines([["coastN", "502,318 590,315"], ["coastN", "940,318 985,303"], ["coastN", "1040,420 1065,455 1120,460 1210,405 1260,415 1310,460 1385,520"]])} stroke="#9aa4ab" stroke-width="1.300" stroke-dasharray="5 4"></path>
        </g>
        <path d=${LAKES} fill="#aadafc"></path>
        <g class="stroke">
          <path d=${TRACKS} stroke="#fff" stroke-width="2"></path>
          <path d=${MINOR} stroke="#f6d382" stroke-width="2.400"></path>
          <path d=${ROADS} stroke="#f4c96c" stroke-width="4.200"></path>
          <path d=${ROADS} stroke="#fde39c" stroke-width="2.200"></path>
          <path d=${FREEWAYS} stroke="#f3c76a" stroke-width="6.600"></path>
          <path d=${FREEWAYS} stroke="#ffe7a0" stroke-width="4.200"></path>
        </g>
        ${DOTS.map(([a, b]) => {
          const [x, y] = place("whole", a, b);
          return svg`<circle class="dot" cx=${x} cy=${y} r="2.700"></circle>`;
        })}
        ${CITY_DOTS.map(([a, b]) => {
          const [x, y] = place("whole", a, b);
          return svg`<circle class="dot big" cx=${x} cy=${y} r="3.800"></circle>`;
        })}
        <circle cx=${mx} cy=${my} r="5" fill="#fff" stroke="#111" stroke-width="2.200"></circle>
        ${US_ROUTES.map(usShield)} ${INTERSTATES.map(interstate)} ${LABELS.map(labelTpl)} ${PINS.map(pinTpl)}
        <text class="logo" x="1218" y="1712" textLength="109" lengthAdjust="spacingAndGlyphs">${GOOGLE.map(
          ([c, f]) => svg`<tspan fill=${f}>${c}</tspan>`
        )}</text>
      </svg>
      <button class="locate" aria-label="Locate">
        <svg width="28" height="28" viewBox="-14 -14 28 28">
          <circle r="9.700" fill="none" stroke="#000" stroke-width="3.200"></circle>
          <path d="M0-13.500V-5M0 13.500V5M-13.500 0H-5M13.500 0H5" stroke="#000" stroke-width="3.400"></path>
          <circle r="1.700"></circle>
        </svg>
      </button>
      <div class="zoom">
        <button aria-label="Zoom in">
          <svg width="18" height="18" viewBox="0 0 18 18"><path d="M6.500 0h5v6.500H18v5h-6.500V18h-5v-6.500H0v-5h6.500z" fill="#666"></path></svg>
        </button>
        <button aria-label="Zoom out">
          <svg width="18" height="18" viewBox="0 0 18 18"><path d="M0 6.500h18v5H0z" fill="#666"></path></svg>
        </button>
      </div>
      <div class="credits"><span>Map data ©2018 Google</span><span>Terms of Use</span></div>
    `;
  }
}

/* ---------- page ---------- */

const SUGGESTIONS = [
  { rest: "", where: "OR, USA" },
  { rest: ", oregon", where: "Astoria, OR, USA" },
  { rest: " Riverwalk Inn", where: "Industry Street, Astoria, OR, USA" },
  { rest: " / Warrenton / Seaside KOA Resort", where: "Northwest Ridge Road, Hammond, OR, USA" },
  { rest: " Coffee House & Bistro", where: "11th Street, Astoria, OR, USA" },
];

@customElement("app-root")
export class AppRoot extends LitElement {
  @state() private query = "Astoria";

  static styles = css`
    :host { display: flex; flex-direction: column; height: 1916px; background: #6196a6; font-family: Roboto, sans-serif; }
    header { box-sizing: border-box; height: 172px; padding: 16px 6px 0 0; display: flex; flex-direction: column; align-items: center; background: #08233e; color: #faebd7; box-shadow: 0 3px 8px 1px rgba(40, 40, 40, 0.75); }
    .title { display: block; width: 380px; height: 98px; overflow: visible; }
    .title text { font: italic 700 92px "Lobster", "Liberation Serif", serif; fill: #faebd7; stroke: #faebd7; stroke-width: 1.5px; }
    h2 { margin: 0; font-size: 35px; line-height: 42px; font-weight: 700; white-space: nowrap; }
    main { flex: 1; width: 1400px; margin-left: 1207px; }
    .search { box-sizing: border-box; height: 144px; padding: 9px 0 0 175px; }
    .caption { display: block; color: #fff; font-size: 35px; line-height: 44px; font-weight: 700; }
    .row { display: flex; align-items: flex-start; gap: 15px; padding-top: 13px; }
    .field { position: relative; z-index: 2; width: 876px; }
    input { display: block; box-sizing: border-box; width: 876px; height: 57px; padding: 0 13px 1px; border: 2px solid #5b95f5; background: #fff; font: 23px Roboto, sans-serif; color: #000; outline: 0; box-shadow: 2px 3px 5px rgba(0, 0, 0, 0.4); border-radius: 0; }
    .go { width: 128px; height: 51px; margin-top: 1px; padding: 0; border: 0; border-radius: 10px; background: #425c72; color: #fff; font: 700 27px "Liberation Sans", Arial, sans-serif; box-shadow: 0 0 6px rgba(0, 0, 0, 0.75); }
    .list { position: absolute; left: 1px; top: 58px; width: 875px; height: 307px; box-sizing: border-box; display: flex; flex-direction: column; margin: 0; padding: 0; background: #fff; border-top: 2px solid #d9d9d9; border-radius: 4px; box-shadow: 0 4px 10px rgba(0, 0, 0, 0.3); font-family: "Liberation Sans", Arial, sans-serif; overflow: hidden; }
    .item { box-sizing: border-box; height: 55.75px; padding-left: 12px; display: flex; align-items: flex-start; white-space: pre; border-bottom: 2px solid #e6e6e6; }
    .item:last-of-type { border-bottom-color: transparent; }
    .item svg { flex: none; width: 16px; height: 27px; margin: 13px 17px 0 0; }
    .name { font-size: 22.75px; line-height: 51px; margin-right: 5px; }
    .where { font-size: 19.25px; line-height: 54px; color: #999; }
    .powered { display: block; width: 220px; height: 30px; margin: -3px 2px 0 auto; }
    .powered text { font-family: "Product Sans", Lato, sans-serif; font-size: 23.5px; fill: #777; }
    footer { box-sizing: border-box; height: 85px; padding: 18px 6px 0 0; background: #08233e; color: #fff; text-align: center; font-size: 24.500px; line-height: 29px; }
  `;

  render() {
    return html`
      <header>
        <svg class="title" viewBox="0 0 380 98" role="heading">
          <text transform="translate(9 76) skewX(11)" textLength="358" lengthAdjust="spacingAndGlyphs">Clam Tides</text>
        </svg>
        <h2>Find the best tides for clam digging near you!</h2>
      </header>
      <main>
        <section class="search">
          <label class="caption">Enter a location:</label>
          <div class="row">
            <div class="field">
              <input .value=${this.query} @input=${(e: Event) => (this.query = (e.target as HTMLInputElement).value)} />
              <div class="list">
                ${SUGGESTIONS.map(
                  (s) => html`<div class="item">
                    <svg viewBox="0 0 16 27"><path fill="#b3b3b3" fill-rule="evenodd" d="M8 0a8 8 0 0 0-8 8c0 4 3 6 5.500 11 1 2 1.700 5 2.500 8 .800-3 1.500-6 2.500-8C13 14 16 12 16 8a8 8 0 0 0-8-8zm0 5a3 3 0 1 1 0 6 3 3 0 0 1 0-6z"></path></svg><span class="name"><b>Astoria</b>${s.rest}</span><span class="where">${s.where}</span></div>`
                )}
                <svg class="powered" viewBox="0 0 220 30">
                  <text x="9" y="22" textLength="124" lengthAdjust="spacingAndGlyphs">powered by</text>
                  <text x="138" y="22" textLength="82" lengthAdjust="spacingAndGlyphs" font-weight="700">${GOOGLE.map(
                    ([c, f]) => svg`<tspan style="fill:${f}">${c}</tspan>`
                  )}</text>
                </svg>
              </div>
            </div>
            <button class="go">Search</button>
          </div>
        </section>
        <tide-map></tide-map>
      </main>
      <footer>Created by: Michael Allain<br />Last updated: 5/23/18</footer>
    `;
  }
}
